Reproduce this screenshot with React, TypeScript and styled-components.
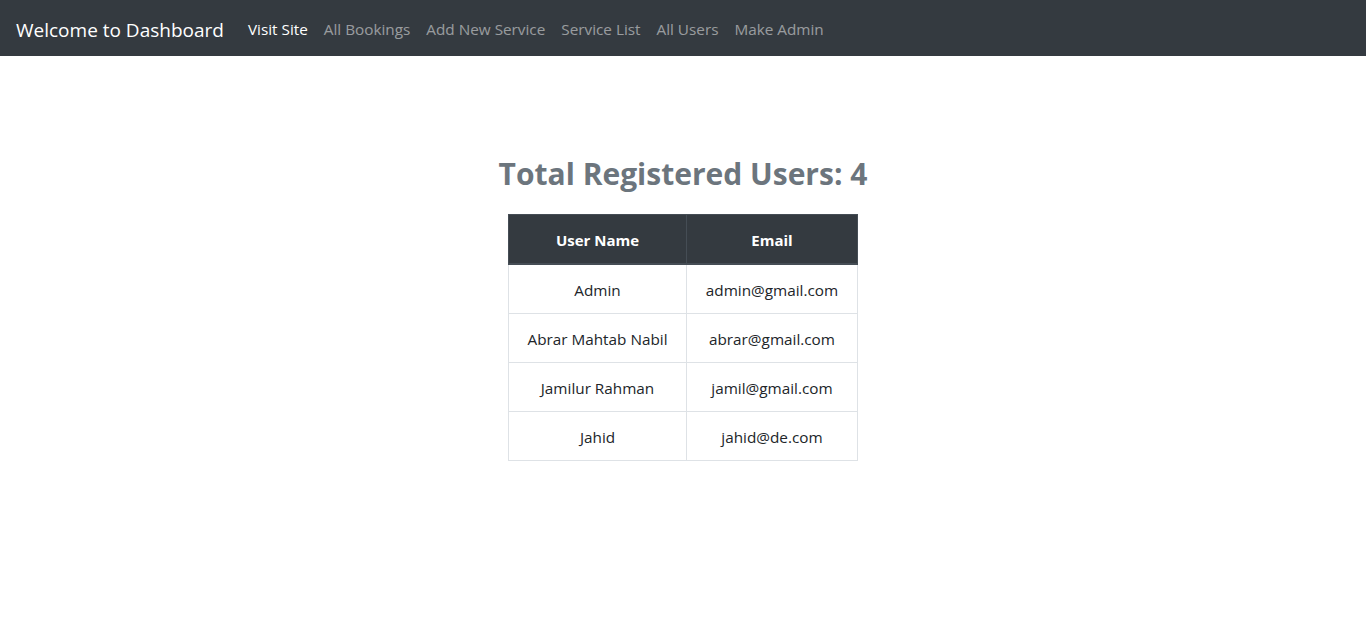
import React from "react";
import styled, { createGlobalStyle } from "styled-components";

const Global = createGlobalStyle`
  * { box-sizing: border-box; }
  body {
    margin: 0;
    font-family: "Open Sans", "Noto Sans", sans-serif;
    font-size: 16px;
    line-height: 1.5;
    color: #212529;
    background: #fff;
  }
`;

const Navbar = styled.nav`
  display: flex;
  align-items: center;
  height: 56px;
  padding: 10px 16px 6px;
  background: #343a40;
`;

const Brand = styled.a`
  font-size: 19px;
  line-height: 30px;
  color: #fff;
  margin-right: 16px;
  text-decoration: none;
  white-space: nowrap;
`;

const NavList = styled.div`
  display: flex;
  align-items: center;
`;

const NavLink = styled.a<{ $active?: boolean }>`
  padding: 7px 8px 9px;
  font-size: 15.3px;
  line-height: 24px;
  color: ${(p) => (p.$active ? "#fff" : "rgba(255,255,255,0.5)")};
  text-decoration: none;
  white-space: nowrap;
`;

const Main = styled.main`
  display: flex;
  flex-direction: column;
  align-items: center;
  padding-top: 99px;
`;

const Heading = styled.h2`
  margin: 0 0 21px;
  font-size: 30px;
  line-height: 38px;
  font-weight: 700;
  color: #6c757d;
`;

const Table = styled.table`
  border-collapse: collapse;
  table-layout: fixed;
  width: 349px;
  text-align: center;
`;

const Th = styled.th<{ $w: number }>`
  width: ${(p) => p.$w}px;
  padding: 13px 12px 11px;
  background: #343a40;
  color: #fff;
  font-size: 15px;
  font-weight: 700;
  border: 1px solid #454d55;
  border-bottom-width: 2px;
  line-height: 24px;
`;

const Td = styled.td`
  padding: 13px 12px 11px;
  font-size: 15.3px;
  border: 1px solid #dee2e6;
  line-height: 24px;
  white-space: nowrap;
`;

const users = [
  { name: "Admin", email: "admin@gmail.com" },
  { name: "Abrar Mahtab Nabil", email: "abrar@gmail.com" },
  { name: "Jamilur Rahman", email: "jamil@gmail.com" },
  { name: "Jahid", email: "jahid@de.com" },
];

export default function App() {
  return (
    <>
      <Global />
      <Navbar>
        <Brand href="#">Welcome to Dashboard</Brand>
        <NavList>
          <NavLink $active href="#">Visit Site</NavLink>
          <NavLink href="#">All Bookings</NavLink>
          <NavLink href="#">Add New Service</NavLink>
          <NavLink href="#">Service List</NavLink>
          <NavLink href="#">All Users</NavLink>
          <NavLink href="#">Make Admin</NavLink>
        </NavList>
      </Navbar>
      <Main>
        <Heading>Total Registered Users: {users.length}</Heading>
        <Table>
          <thead>
            <tr>
              <Th $w={178}>User Name</Th>
              <Th $w={171}>Email</Th>
            </tr>
          </thead>
          <tbody>
            {users.map((u) => (
              <tr key={u.email}>
                <Td>{u.name}</Td>
                <Td>{u.email}</Td>
              </tr>
            ))}
          </tbody>
        </Table>
      </Main>
    </>
  );
}
